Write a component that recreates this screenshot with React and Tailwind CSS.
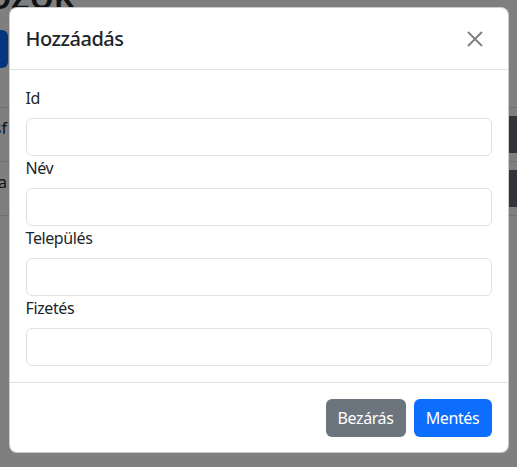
export default function App() {
  const fields = ["Id", "Név", "Település", "Fizetés"];

  return (
    <div className="relative h-[467px] w-[517px] overflow-hidden bg-white font-['Noto_Sans',sans-serif] text-[#212529]">
      {/* page behind the modal */}
      <div>
        <h1 className="-mt-[30px] -ml-[100px] h-[38px] text-[40px] font-medium leading-[48px] tracking-[-0.5px]">Dolgozók</h1>
        <button className="-ml-[112px] mt-[22px] h-[38px] w-[120px] rounded-md bg-[#0d6efd] text-white">Új</button>
        <table className="mt-[39px] w-full border-collapse">
          <tbody>
            {["Kovácsf", "Szaba"].map((n) => (
              <tr key={n} className="border-t border-b border-[#dee2e6]">
                <td className="w-[10px] overflow-hidden whitespace-nowrap px-0 py-2 align-top">
                  <span className="-ml-[57px] block w-[64px] text-right leading-6">{n}</span>
                </td>
                <td />
                <td className="w-[70px] py-2 pr-0 align-top">
                  <div className="h-[37px] w-[120px] whitespace-nowrap bg-[#626a72] pl-[62px] pt-[6px] text-[15px] text-[#d8d8d8]">Szerk</div>
                </td>
              </tr>
            ))}
          </tbody>
        </table>
      </div>

      {/* backdrop + modal */}
      <div className="absolute inset-0 bg-black/50">
        <div className="mx-auto mt-[7px] w-[500px] rounded-lg border border-black/20 bg-white">
          <div className="flex items-center justify-between border-b border-[#dee2e6] px-4 pt-4 pb-[15px]">
            <h5 className="text-[20px] font-medium leading-[30px] tracking-[-0.5px]">Hozzáadás</h5>
            <button className="mr-[1px] flex h-[24px] w-[32px] items-center justify-center opacity-50" aria-label="Close">
              <svg width="16" height="16" viewBox="0 0 16 16">
                <path d="M1 1L15 15M15 1L1 15" stroke="#000" strokeWidth="1.8" />
              </svg>
            </button>
          </div>
          <div className="p-4">
            {fields.map((f) => (
              <div key={f}>
                <label className="mb-2 block text-base leading-6 tracking-[-0.4px]">{f}</label>
                <input className="block h-[38px] w-full rounded-md border border-[#dee2e6] px-3" />
              </div>
            ))}
          </div>
          <div className="flex justify-end gap-2 border-t border-[#dee2e6] px-3 pt-4 pb-[15px]">
            <button className="h-[38px] w-[80px] rounded-md bg-[#6c757d] text-base tracking-[-0.4px] text-white">Bezárás</button>
            <button className="mr-1 h-[38px] w-[78px] rounded-md bg-[#0d6efd] text-base tracking-[-0.4px] text-white">Mentés</button>
          </div>
        </div>
      </div>
    </div>
  );
}
